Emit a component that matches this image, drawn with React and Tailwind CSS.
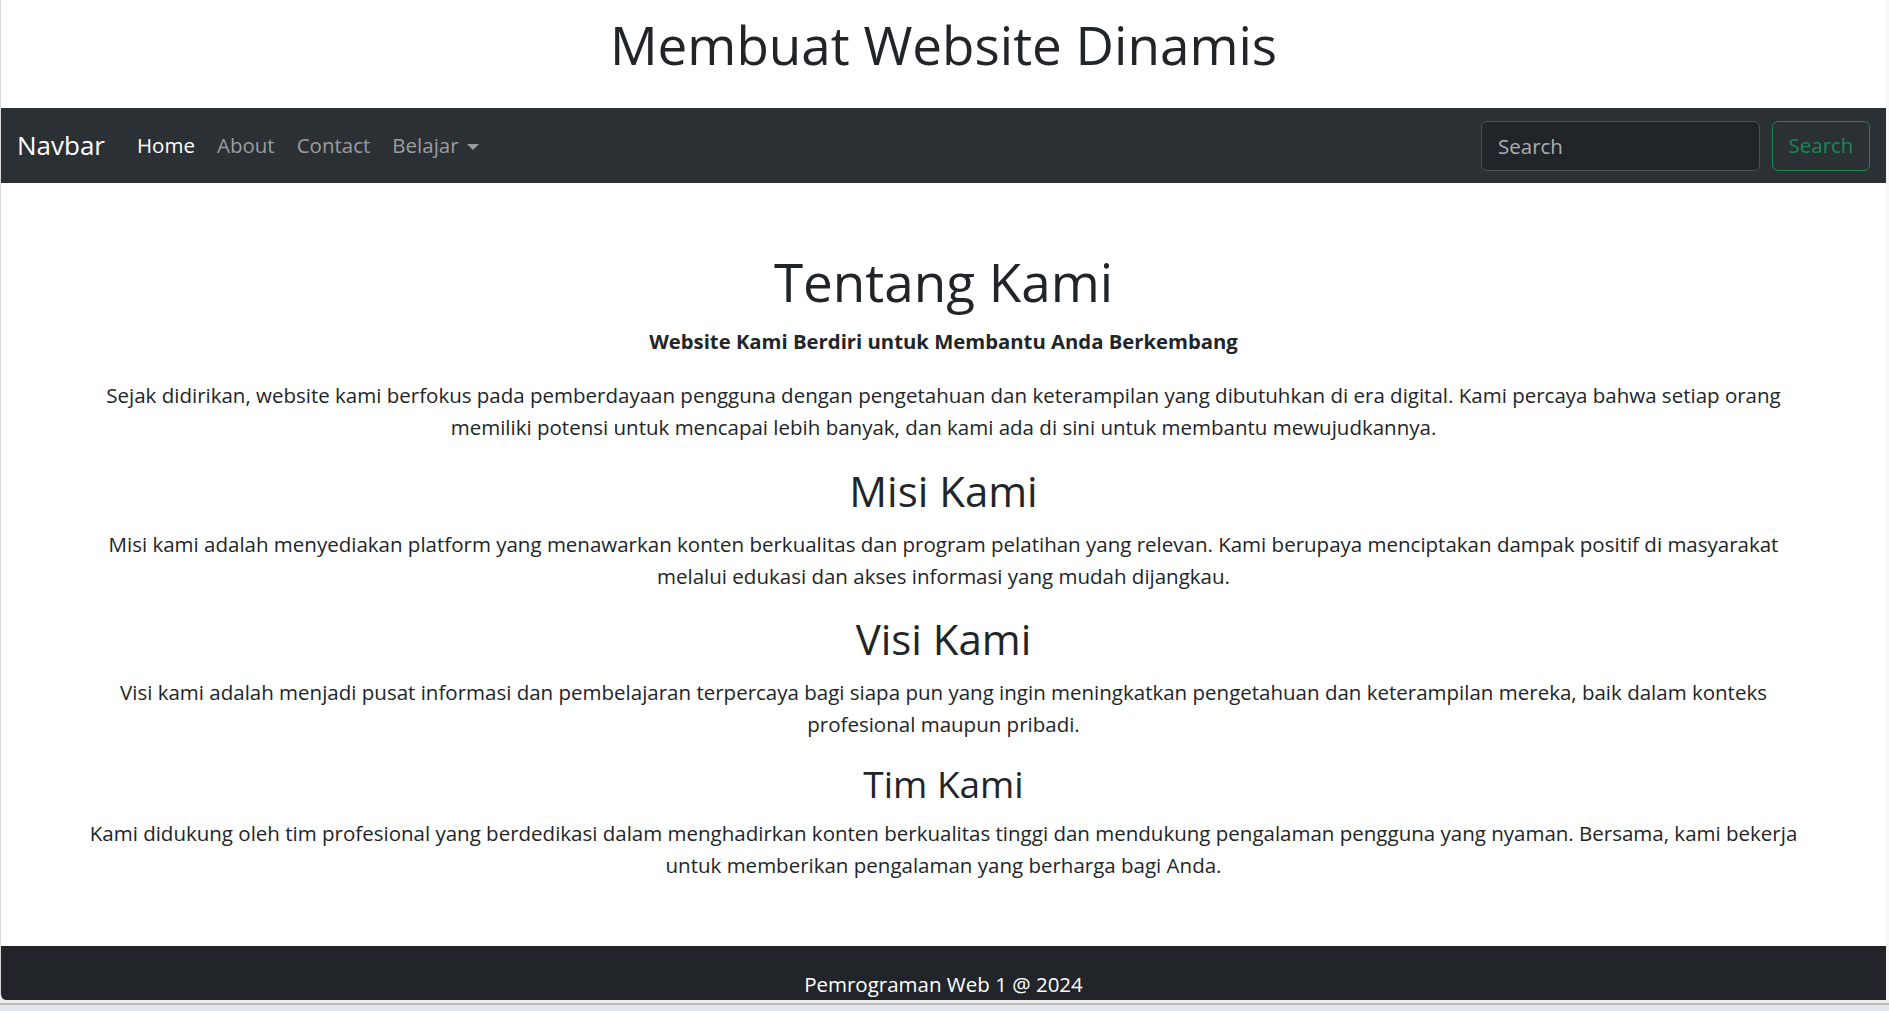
export default function App() {
  const sections = [
    {
      title: "Misi Kami",
      size: "h2",
      text: "Misi kami adalah menyediakan platform yang menawarkan konten berkualitas dan program pelatihan yang relevan. Kami berupaya menciptakan dampak positif di masyarakat melalui edukasi dan akses informasi yang mudah dijangkau.",
    },
    {
      title: "Visi Kami",
      size: "h2",
      text: "Visi kami adalah menjadi pusat informasi dan pembelajaran terpercaya bagi siapa pun yang ingin meningkatkan pengetahuan dan keterampilan mereka, baik dalam konteks profesional maupun pribadi.",
    },
    {
      title: "Tim Kami",
      size: "h3",
      text: "Kami didukung oleh tim profesional yang berdedikasi dalam menghadirkan konten berkualitas tinggi dan mendukung pengalaman pengguna yang nyaman. Bersama, kami bekerja untuk memberikan pengalaman yang berharga bagi Anda.",
    },
  ];

  return (
    <div className="h-[1011px] w-full overflow-hidden bg-[#f7f7f7] flex flex-col font-['Open_Sans',sans-serif] text-[#212529]">
      <div className="h-[1000px] shrink-0 mr-[3px] border-l border-[#d9d9d9] bg-white flex flex-col overflow-hidden rounded-bl-[6px]">
        {/* judul */}
        <header className="h-[108px] shrink-0 pt-[13px] text-center">
          <h1 className="text-[53px] leading-[64px] font-medium">Membuat Website Dinamis</h1>
        </header>

        {/* navbar */}
        <nav className="h-[75px] shrink-0 bg-[#2b3035] flex items-center justify-between pl-[16px] pr-[16px]">
          <div className="flex items-center">
            <a className="text-[26px] text-white mr-[21px] cursor-pointer">Navbar</a>
            <ul className="flex items-center text-[20.5px]">
              <li className="px-[11px] text-white">Home</li>
              <li className="px-[11px] text-[#9a9c9f]">About</li>
              <li className="px-[11px] text-[#9a9c9f]">Contact</li>
              <li className="px-[11px] text-[#9a9c9f] flex items-center">
                Belajar
                <span className="ml-[8px] mt-[2px] w-0 h-0 border-x-[6px] border-x-transparent border-t-[6px] border-t-[#9a9c9f]" />
              </li>
            </ul>
          </div>
          <form className="flex items-center gap-[12px]" onSubmit={(e) => e.preventDefault()}>
            <input
              placeholder="Search"
              className="w-[279px] h-[50px] px-[16px] rounded-[6px] bg-[#212529] border border-[#495057] text-[20.5px] text-white placeholder-[#abafb3] focus:outline-none"
            />
            <button className="w-[98px] h-[50px] rounded-[6px] border border-[#198754] text-[#198754] text-[20.5px]">
              Search
            </button>
          </form>
        </nav>

        {/* konten */}
        <main className="shrink-0 px-[82px] pt-[67px] pb-[43px] text-center">
          <h1 className="text-[53px] leading-[64px] font-medium mb-[15px]">Tentang Kami</h1>
          <h5 className="text-[20.3px] leading-[25px] font-bold mb-[25px]">
            Website Kami Berdiri untuk Membantu Anda Berkembang
          </h5>
          <p className="text-[20.5px] leading-[32px] mb-[23px]">
            Sejak didirikan, website kami berfokus pada pemberdayaan pengguna dengan pengetahuan dan keterampilan yang dibutuhkan di era digital. Kami percaya bahwa setiap orang memiliki potensi untuk mencapai lebih banyak, dan kami ada di sini untuk membantu mewujudkannya.
          </p>
          {sections.map((s) => (
            <div key={s.title}>
              {s.size === "h2" ? (
                <h2 className="text-[42px] leading-[50px] font-medium mb-[12px]">{s.title}</h2>
              ) : (
                <h3 className="text-[37px] leading-[44px] font-medium mb-[11px]">{s.title}</h3>
              )}
              <p className="text-[20.5px] leading-[32px] mb-[22px]">{s.text}</p>
            </div>
          ))}
        </main>

        <footer className="shrink-0 bg-[#212529] text-white text-center pt-[22px] pb-[22px] text-[20.5px] leading-[32px]">
          Pemrograman Web 1 @ 2024
        </footer>
      </div>
      <div className="h-[3px] shrink-0 bg-[#ececec]" />
      <div className="h-[2px] shrink-0 bg-[#bdbdbd]" />
      <div className="flex-1 bg-[#e1e7ec]" />
    </div>
  );
}
